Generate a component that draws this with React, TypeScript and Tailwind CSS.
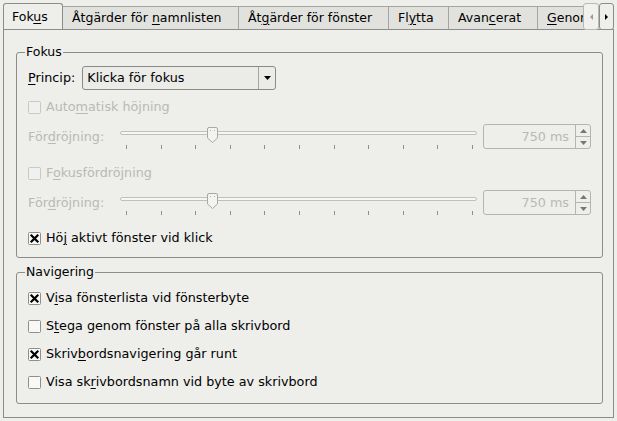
import React from "react";

const U = ({ children }: { children: React.ReactNode }) => (
  <span className="underline decoration-1 underline-offset-[2px]">{children}</span>
);

function Box({ checked, disabled }: { checked?: boolean; disabled?: boolean }) {
  return (
    <svg width="13" height="13" viewBox="0 0 13 13" className="shrink-0">
      <rect
        x="0.5"
        y="0.5"
        width="12"
        height="12"
        rx="1"
        fill={disabled ? "#f0f0ee" : "#f8f8f6"}
        stroke={disabled ? "#c8c8c4" : "#8e8e8a"}
      />
      {checked && (
        <path d="M3.5 3.5 L9.5 9.5 M9.5 3.5 L3.5 9.5" stroke="#000" strokeWidth="2.2" strokeLinecap="square" />
      )}
    </svg>
  );
}

function Check({
  checked,
  disabled,
  children,
  className = "",
}: {
  checked?: boolean;
  disabled?: boolean;
  children: React.ReactNode;
  className?: string;
}) {
  return (
    <div className={`h-[16px] flex items-center gap-[5px] ${disabled ? "text-[#b9b9b5]" : "text-black"} ${className}`}>
      <Box checked={checked} disabled={disabled} />
      <span className="leading-[16px] whitespace-nowrap">{children}</span>
    </div>
  );
}

function Slider() {
  const ticks = Array.from({ length: 11 }, (_, i) => 6.5 + Math.round(i * 34.6));
  return (
    <svg width="363" height="26" className="shrink-0 block">
      <rect x="0.5" y="7.5" width="356" height="3" rx="1.5" fill="#f6f6f4" stroke="#bfbfbb" />
      {ticks.map((x) => (
        <line key={x} x1={x} x2={x} y1="21" y2="25" stroke="#8e8e8a" />
      ))}
      <path
        d="M87.5 5 q0 -1.5 1.5 -1.5 h7 q1.5 0 1.5 1.5 v9 l-5 4.5 l-5 -4.5 z"
        fill="#f3f3f1"
        stroke="#a8a8a4"
      />
      <rect x="90" y="6" width="1" height="1" fill="#b4b4b0" />
      <rect x="94" y="6" width="1" height="1" fill="#b4b4b0" />
    </svg>
  );
}

function Spin() {
  return (
    <div className="w-[108px] h-[25px] border border-[#b4b4b0] rounded-[3px] flex shrink-0">
      <div className="flex-1 flex items-center justify-end pr-[6px] text-[#b9b9b5] leading-[16px]">
        <span>750 ms</span>
      </div>
      <div className="w-[15px] border-l border-[#b4b4b0] flex flex-col">
        <div className="flex-1 flex items-center justify-center border-b border-[#b4b4b0]">
          <svg width="7" height="4" viewBox="0 0 7 4">
            <path d="M0 4 L3.5 0 L7 4 Z" fill="#777" />
          </svg>
        </div>
        <div className="flex-1 flex items-center justify-center">
          <svg width="7" height="4" viewBox="0 0 7 4">
            <path d="M0 0 L7 0 L3.5 4 Z" fill="#777" />
          </svg>
        </div>
      </div>
    </div>
  );
}

function SliderRow({ className = "" }: { className?: string }) {
  return (
    <div className={`flex items-start h-[25px] ${className}`}>
      <div className="w-[92px] h-[25px] flex items-center text-[#b9b9b5] leading-[16px] whitespace-nowrap">
        <span>
          För<U>d</U>röjning:
        </span>
      </div>
      <Slider />
      <Spin />
    </div>
  );
}

function Tab({ w, children }: { w: string; children: React.ReactNode }) {
  return (
    <div
      className={`${w} h-[23px] shrink-0 border-t border-r border-[#a4a4a0] bg-[#e1e1dd] pl-[9px] flex items-center whitespace-nowrap text-black`}
    >
      <span>{children}</span>
    </div>
  );
}

export default function App() {
  return (
    <div className="w-[617px] h-[421px] bg-[#eeeeeb] font-['DejaVu_Sans',sans-serif] text-[12.75px] text-black overflow-hidden">
      {/* tab bar */}
      <div className="h-[29px] flex items-end pl-[3px] text-[12.5px]">
        <div className="w-[580px] h-[29px] flex items-end overflow-hidden">
          <div className="relative z-10 w-[60px] h-[27px] -mb-px shrink-0 border border-b-0 border-[#8c8c88] rounded-t-[3px] bg-[#eeeeeb] pl-[8px] flex items-center">
            <span>
              Fok<U>u</U>s
            </span>
          </div>
          <Tab w="w-[176px]">
            Åtgärder för <U>n</U>amnlisten
          </Tab>
          <Tab w="w-[150px]">
            Åt<U>g</U>ärder för fönster
          </Tab>
          <Tab w="w-[60px]">
            Fl<U>y</U>tta
          </Tab>
          <Tab w="w-[89px]">
            Avan<U>c</U>erat
          </Tab>
          <Tab w="w-[120px]">
            <U>G</U>enomskinlighet
          </Tab>
        </div>
        <div className="w-[16px] h-[27px] -mb-px relative z-10 border border-[#b8b8b4] rounded-[3px] bg-[#f0f0ee] flex items-center justify-center">
          <svg width="3" height="6" viewBox="0 0 3 6">
            <path d="M3 0 L0 3 L3 6 Z" fill="#9a9a96" />
          </svg>
        </div>
        <div className="w-[15px] h-[27px] -mb-px relative z-10 border border-[#8c8c88] rounded-[3px] bg-[#eeeeeb] flex items-center justify-center">
          <svg width="3" height="6" viewBox="0 0 3 6">
            <path d="M0 0 L3 3 L0 6 Z" fill="#000" />
          </svg>
        </div>
      </div>

      {/* panel */}
      <div className="ml-[3px] w-[611px] h-[389px] border border-[#8c8c88] bg-[#eeeeeb] flex flex-col">
        <fieldset className="mt-[15px] ml-[12px] mr-[10px] border border-[#8c8c88] rounded-[3px] p-0 m-0 min-w-0">
          <legend className="ml-[8px] px-[1px] leading-[14px] text-[12.5px]">Fokus</legend>
          <div className="pl-[11px] pb-[11px] flex flex-col">
            <div className="mt-[7px] flex items-center h-[24px]">
              <span className="leading-[16px]">
                <U>P</U>rincip:
              </span>
              <div className="ml-[7px] w-[194px] h-[24px] border border-[#8a8a86] rounded-[3px] bg-[#ebebe8] flex">
                <div className="flex-1 pl-[4px] flex items-center leading-[16px]">
                  <span>Klicka för fokus</span>
                </div>
                <div className="w-[17px] border-l border-[#a4a4a0] flex items-center justify-center">
                  <svg width="7" height="4" viewBox="0 0 7 4">
                    <path d="M0 0 L7 0 L3.5 4 Z" fill="#000" />
                  </svg>
                </div>
              </div>
            </div>
            <Check disabled className="mt-[9px]">
              Auto<U>m</U>atisk höjning
            </Check>
            <SliderRow className="mt-[9px]" />
            <Check disabled className="mt-[16px]">
              F<U>o</U>kusfördröjning
            </Check>
            <SliderRow className="mt-[9px]" />
            <Check checked className="mt-[15px]">
              Hö<U>j</U> aktivt fönster vid klick
            </Check>
          </div>
        </fieldset>

        <fieldset className="mt-[7px] ml-[12px] mr-[10px] border border-[#8c8c88] rounded-[3px] p-0 m-0 min-w-0">
          <legend className="ml-[8px] px-[1px] leading-[14px] text-[12.5px]">Navigering</legend>
          <div className="pl-[11px] pt-[11px] pb-[13px] flex flex-col gap-[12px]">
            <Check checked>
              V<U>i</U>sa fönsterlista vid fönsterbyte
            </Check>
            <Check>
              S<U>t</U>ega genom fönster på alla skrivbord
            </Check>
            <Check checked>
              Skriv<U>b</U>ordsnavigering går runt
            </Check>
            <Check>
              Visa sk<U>r</U>ivbordsnamn vid byte av skrivbord
            </Check>
          </div>
        </fieldset>
      </div>
    </div>
  );
}
